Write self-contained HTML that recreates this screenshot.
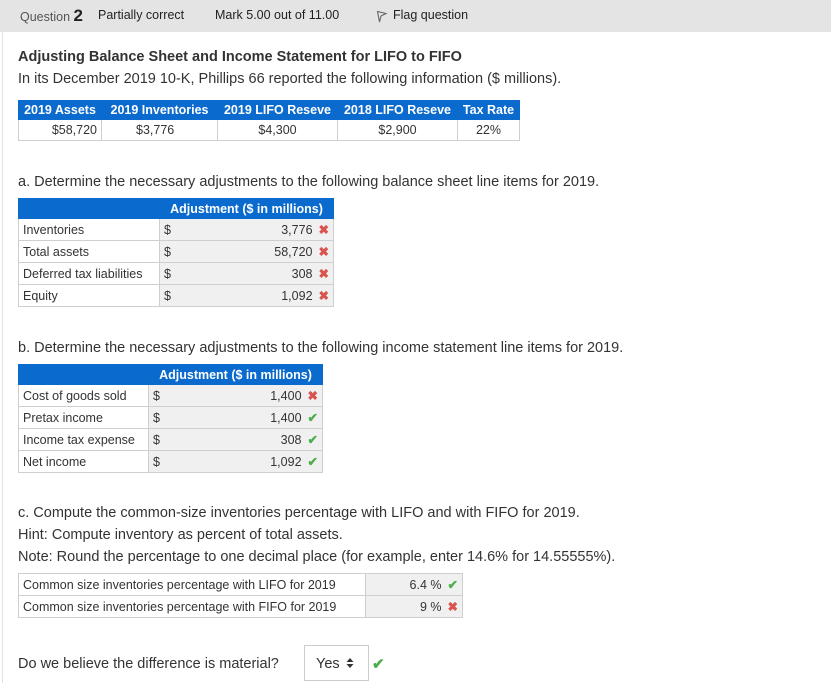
<!DOCTYPE html>
<html><head><meta charset="utf-8">
<style>
*{margin:0;padding:0;box-sizing:border-box}
body{width:831px;height:683px;background:#fff;font-family:"Liberation Sans",sans-serif;color:#333;position:relative;overflow:hidden}
.hdr{position:absolute;left:0;top:0;width:831px;height:32px;background:#e4e4e4}
.a{position:absolute;white-space:nowrap}
.lb{position:absolute;left:2px;top:32px;width:1px;height:651px;background:#e2e2e2}
table{position:absolute;border-collapse:collapse;font-size:12.5px}
td,th{border:1px solid #cfcfcf;padding:0 4px;white-space:nowrap}
th{background:#0a6acd;color:#fff;font-weight:bold;border-color:#0a6acd}
.g{background:#f0f0f0}
.r{text-align:right}
.f{display:flex;justify-content:space-between;align-items:center}
.x{color:#d9534f;font-weight:bold;margin-left:6px}
.c{color:#4cae4c;font-weight:bold;margin-left:6px}
.t{font-size:14.5px}
</style></head><body>
<div class="hdr"></div>
<div class="a" style="left:20px;top:6px;font-size:12.5px;color:#555">Question <b style="font-size:17px;color:#222">2</b></div>
<div class="a" style="left:98px;top:8px;font-size:12.5px;color:#222">Partially correct</div>
<div class="a" style="left:215px;top:8px;font-size:12.5px;color:#222">Mark 5.00 out of 11.00</div>
<svg class="a" style="left:376px;top:10px" width="12" height="13" viewBox="0 0 12 13"><path d="M1.5 1.5 L10 3.5 L5 6 L3.5 12 Z" fill="none" stroke="#666" stroke-width="1.1"/></svg>
<div class="a" style="left:393px;top:8px;font-size:12.5px;color:#222">Flag question</div>
<div class="lb"></div>

<div class="a t" style="left:18px;top:49px;font-weight:bold;color:#333">Adjusting Balance Sheet and Income Statement for LIFO to FIFO</div>
<div class="a t" style="left:18px;top:71px">In its December 2019 10-K, Phillips 66 reported the following information ($ millions).</div>

<table style="left:18px;top:100px;width:502px">
<tr style="height:19px"><th style="width:83px">2019 Assets</th><th style="width:116px">2019 Inventories</th><th style="width:120px">2019 LIFO Reseve</th><th style="width:120px">2018 LIFO Reseve</th><th>Tax Rate</th></tr>
<tr style="height:21px"><td class="r">$58,720</td><td style="padding-left:34px">$3,776</td><td style="text-align:center">$4,300</td><td style="text-align:center">$2,900</td><td style="text-align:center">22%</td></tr>
</table>

<div class="a t" style="left:18px;top:174px">a. Determine the necessary adjustments to the following balance sheet line items for 2019.</div>
<table style="left:18px;top:198px;width:316px">
<tr style="height:20px"><th style="width:141px"></th><th>Adjustment ($ in millions)</th></tr>
<tr style="height:22px"><td>Inventories</td><td class="g"><div class="f"><span>$</span><span>3,776<span class="x">✖</span></span></div></td></tr>
<tr style="height:22px"><td>Total assets</td><td class="g"><div class="f"><span>$</span><span>58,720<span class="x">✖</span></span></div></td></tr>
<tr style="height:22px"><td>Deferred tax liabilities</td><td class="g"><div class="f"><span>$</span><span>308<span class="x">✖</span></span></div></td></tr>
<tr style="height:22px"><td>Equity</td><td class="g"><div class="f"><span>$</span><span>1,092<span class="x">✖</span></span></div></td></tr>
</table>

<div class="a t" style="left:18px;top:340px">b. Determine the necessary adjustments to the following income statement line items for 2019.</div>
<table style="left:18px;top:364px;width:305px">
<tr style="height:20px"><th style="width:130px"></th><th>Adjustment ($ in millions)</th></tr>
<tr style="height:22px"><td>Cost of goods sold</td><td class="g"><div class="f"><span>$</span><span>1,400<span class="x">✖</span></span></div></td></tr>
<tr style="height:22px"><td>Pretax income</td><td class="g"><div class="f"><span>$</span><span>1,400<span class="c">✔</span></span></div></td></tr>
<tr style="height:22px"><td>Income tax expense</td><td class="g"><div class="f"><span>$</span><span>308<span class="c">✔</span></span></div></td></tr>
<tr style="height:22px"><td>Net income</td><td class="g"><div class="f"><span>$</span><span>1,092<span class="c">✔</span></span></div></td></tr>
</table>

<div class="a t" style="left:18px;top:505px">c. Compute the common-size inventories percentage with LIFO and with FIFO for 2019.</div>
<div class="a t" style="left:18px;top:527px">Hint: Compute inventory as percent of total assets.</div>
<div class="a t" style="left:18px;top:549px">Note: Round the percentage to one decimal place (for example, enter 14.6% for 14.55555%).</div>
<table style="left:18px;top:573px;width:445px">
<tr style="height:22px"><td style="width:347px">Common size inventories percentage with LIFO for 2019</td><td class="g r">6.4 %<span class="c">✔</span></td></tr>
<tr style="height:22px"><td>Common size inventories percentage with FIFO for 2019</td><td class="g r">9 %<span class="x">✖</span></td></tr>
</table>

<div class="a t" style="left:18px;top:656px">Do we believe the difference is material?</div>
<div class="a" style="left:304px;top:645px;width:65px;height:36px;border:1px solid #ccc;font-size:14.5px;padding:10px 0 0 11px">Yes</div>
<svg class="a" style="left:346px;top:657px" width="8" height="12" viewBox="0 0 8 12"><path d="M4 1 L7.5 5 H0.5 Z M4 11 L7.5 7 H0.5 Z" fill="#333"/></svg>
<div class="a c" style="left:366px;top:655px;font-size:15px">✔</div>
</body></html>
